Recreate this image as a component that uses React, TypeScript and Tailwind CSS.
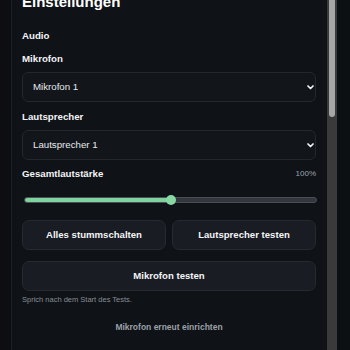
import React from "react";

function Chevron() {
  return (
    <svg width="7" height="5" viewBox="0 0 7 5" className="shrink-0">
      <path d="M1 1 L3.5 3.5 L6 1" fill="none" stroke="#f3f4f6" strokeWidth="1.7" strokeLinecap="round" strokeLinejoin="round" />
    </svg>
  );
}

function SelectBox({ value }: { value: string }) {
  return (
    <div className="mt-[7px] h-[30px] flex items-center justify-between rounded-[6px] border border-[#23272e] bg-[#12151a] pl-[10px] pr-[1px]">
      <span className="text-[9.7px] text-[#e8eaee]">{value}</span>
      <Chevron />
    </div>
  );
}

function Label({ children }: { children: React.ReactNode }) {
  return <div className="text-[9.7px] leading-[12px] font-bold text-[#f3f4f6]">{children}</div>;
}

function ActionButton({ children, className = "" }: { children: React.ReactNode; className?: string }) {
  return (
    <button
      className={`h-[30px] flex items-center justify-center rounded-[7px] border border-[#252930] bg-[#191c22] text-[9.6px] font-bold text-[#f3f4f6] ${className}`}
    >
      {children}
    </button>
  );
}

export default function App() {
  const volume = 50;

  return (
    <div className="h-[350px] w-[350px] overflow-hidden flex bg-[#0c0e11] pl-[11px] font-['Liberation_Sans',Arial,sans-serif]">
      <div className="flex w-[326px] border-l border-[#1d2026] bg-[#0f1216]">
        {/* Settings content */}
        <div className="flex-1 flex flex-col pl-[10px] pr-[11px]">
          <h1 className="-mt-[8px] text-[15px] leading-[20px] font-bold text-white">Einstellungen</h1>

          <div className="mt-[18px]">
            <Label>Audio</Label>
          </div>

          <div className="mt-[11px]">
            <Label>Mikrofon</Label>
            <SelectBox value="Mikrofon 1" />
          </div>

          <div className="mt-[9px]">
            <Label>Lautsprecher</Label>
            <SelectBox value="Lautsprecher 1" />
          </div>

          <div className="mt-[8px] flex items-center justify-between">
            <Label>Gesamtlautstärke</Label>
            <span className="text-[8px] leading-[12px] text-[#9ca3af]">100%</span>
          </div>

          {/* Volume slider */}
          <div className="mt-[15px] h-[10px] ml-[2px] -mr-[1px] flex items-center">
            <div className="relative w-full h-[6px] rounded-full bg-[#33363c] border border-[#4a4d53]">
              <div className="h-full rounded-full bg-[#7fd39c]" style={{ width: `${volume}%` }} />
              <div
                className="absolute top-1/2 -translate-y-1/2 -translate-x-1/2 w-[10px] h-[10px] rounded-full bg-[#86d9a3]"
                style={{ left: `${volume}%` }}
              />
            </div>
          </div>

          <div className="mt-[15px] grid grid-cols-2 gap-[6px]">
            <ActionButton>Alles stummschalten</ActionButton>
            <ActionButton>Lautsprecher testen</ActionButton>
          </div>

          <ActionButton className="mt-[11px] w-full">Mikrofon testen</ActionButton>

          <p className="mt-[4px] text-[7.5px] leading-[10px] text-[#878d96]">Sprich nach dem Start des Tests.</p>

          <div className="mt-[17px] text-center text-[8.5px] leading-[10px] font-bold text-[#9aa0a9]">
            Mikrofon erneut einrichten
          </div>
        </div>

        {/* Scrollbar */}
        <div className="w-[10px] bg-[#3a3a3a] px-[2px]">
          <div className="h-[117px] rounded-b-full bg-[#a6a6a6]" />
        </div>
      </div>
      <div className="flex-1 bg-[#0d1013]" />
    </div>
  );
}
